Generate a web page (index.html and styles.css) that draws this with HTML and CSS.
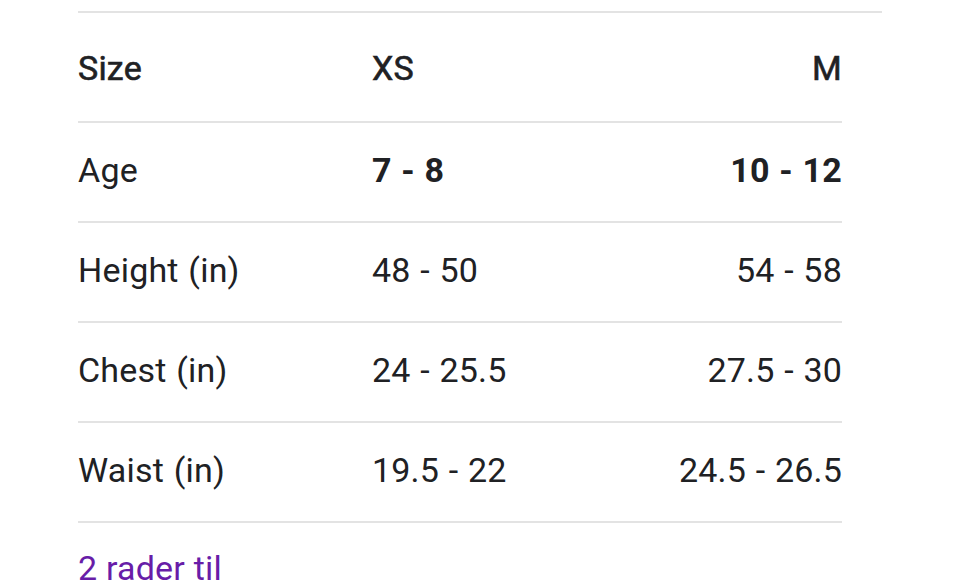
FILE: index.html
```html
<!DOCTYPE html>
<html>
<head>
<meta charset="utf-8">
<link rel="stylesheet" href="styles.css">
</head>
<body>
<div class="panel">
  <div class="chart">
    <div class="row head">
      <div class="cell label">Size</div>
      <div class="cell mid">XS</div>
      <div class="cell right">M</div>
    </div>
    <div class="row">
      <div class="cell label">Age</div>
      <div class="cell mid bold">7 - 8</div>
      <div class="cell right bold">10 - 12</div>
    </div>
    <div class="row">
      <div class="cell label">Height (in)</div>
      <div class="cell mid">48 - 50</div>
      <div class="cell right">54 - 58</div>
    </div>
    <div class="row">
      <div class="cell label">Chest (in)</div>
      <div class="cell mid">24 - 25.5</div>
      <div class="cell right">27.5 - 30</div>
    </div>
    <div class="row">
      <div class="cell label">Waist (in)</div>
      <div class="cell mid">19.5 - 22</div>
      <div class="cell right">24.5 - 26.5</div>
    </div>
  </div>
  <a class="more" href="#">2 rader til</a>
</div>
</body>
</html>
```
FILE: styles.css
```css
html, body {
  margin: 0;
  padding: 0;
  background: #ffffff;
}
body {
  font-family: Roboto, "Noto Sans", Arial, sans-serif;
  color: #202124;
  overflow: hidden;
}
.panel {
  margin: 11px 78px 0 78px;
  border-top: 2px solid #e3e3e3;
  width: 804px;
}
.chart {
  width: 764px;
}
.row {
  box-sizing: border-box;
  display: grid;
  grid-template-columns: 294px 1fr auto;
  align-items: center;
  height: 100px;
  padding-bottom: 5px;
  border-bottom: 2px solid #e3e3e3;
  font-size: 34px;
  letter-spacing: 0.2px;
  word-spacing: 1px;
}
.row.head {
  height: 110px;
  padding-top: 2px;
  padding-bottom: 0;
}
.cell {
  line-height: 40px;
}
.right {
  text-align: right;
}
.bold {
  font-weight: 700;
}
.head .cell {
  font-weight: 400;
  -webkit-text-stroke: 0.6px #202124;
}
.more {
  display: block;
  margin-top: 25px;
  font-size: 34px;
  line-height: 40px;
  letter-spacing: 0.2px;
  color: #681da8;
  text-decoration: none;
}
```
